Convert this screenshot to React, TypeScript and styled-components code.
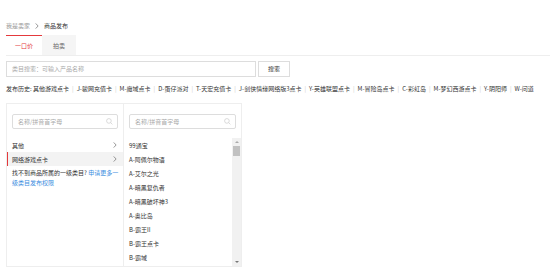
import styled, { createGlobalStyle } from "styled-components";

const GlobalStyle = createGlobalStyle`
    html, body {
        margin: 0;
        padding: 0;
        background: #fff;
    }
    body {
        font-family: "Noto Sans CJK SC", "Noto Sans", sans-serif;
        font-size: 6px;
        color: #333;
    }
`;

const Page = styled.div`
    padding: 21px 6px 0;
    width: 550px;
    box-sizing: border-box;
    overflow: hidden;
`;

const Breadcrumb = styled.div`
    display: flex;
    align-items: center;
    gap: 5px;
    height: 10px;
    line-height: 10px;
    color: #999;
`;

const Crumb = styled.span<{ $current?: boolean }>`
    color: ${(p) => (p.$current ? "#333" : "#999")};
`;

const Tabs = styled.div`
    display: flex;
    margin-top: 4px;
    margin-right: -6px;
    border-bottom: 1px solid #eee;
`;

const Tab = styled.div<{ $active?: boolean }>`
    width: ${(p) => (p.$active ? 36 : 34)}px;
    height: 20px;
    line-height: 20px;
    text-align: center;
    box-sizing: border-box;
    border-top: 1px solid ${(p) => (p.$active ? "#e4393c" : "#f5f5f5")};
    background: ${(p) => (p.$active ? "#fff" : "#f5f5f5")};
    color: ${(p) => (p.$active ? "#e4393c" : "#666")};
`;

const SearchRow = styled.div`
    display: flex;
    gap: 2px;
    margin-top: 5px;
`;

const SearchInput = styled.div`
    width: 250px;
    height: 16px;
    line-height: 14px;
    box-sizing: border-box;
    border: 1px solid #ddd;
    padding-left: 5px;
    color: #aaa;
`;

const SearchButton = styled.div`
    width: 32px;
    height: 16px;
    line-height: 14px;
    box-sizing: border-box;
    border: 1px solid #ddd;
    text-align: center;
    color: #333;
`;

const History = styled.div`
    display: flex;
    align-items: center;
    margin-top: 7px;
    height: 10px;
    line-height: 10px;
    white-space: nowrap;
    color: #333;
`;

const Sep = styled.span`
    color: #ccc;
    margin: 0 3px;
`;

const Panel = styled.div`
    display: flex;
    width: 236px;
    height: 164px;
    margin-top: 9px;
    border: 1px solid #eee;
    box-sizing: border-box;
`;

const Column = styled.div<{ $divider?: boolean }>`
    display: flex;
    flex-direction: column;
    width: ${(p) => (p.$divider ? 117 : 118)}px;
    border-right: ${(p) => (p.$divider ? "1px solid #eee" : "none")};
    box-sizing: border-box;
    padding-top: 10px;
`;

const FilterBox = styled.div`
    display: flex;
    align-items: center;
    justify-content: space-between;
    margin: 0 5px;
    height: 15px;
    box-sizing: border-box;
    border: 1px solid #ddd;
    border-radius: 2px;
    padding: 0 4px 0 5px;
    color: #aaa;
`;

const ListArea = styled.div`
    display: flex;
    flex: 1;
    margin-top: 9px;
    min-height: 0;
`;

const List = styled.div`
    flex: 1;
    overflow: hidden;
`;

const Item = styled.div<{ $selected?: boolean }>`
    display: flex;
    align-items: center;
    justify-content: space-between;
    height: 14px;
    padding: 0 6px 0 ${(p) => (p.$selected ? 4 : 5)}px;
    background: ${(p) => (p.$selected ? "#f3f3f3" : "transparent")};
    border-left: ${(p) => (p.$selected ? "1px solid #e4393c" : "none")};
    color: #333;
`;

const Note = styled.div`
    padding: 2px 5px 0;
    color: #333;
`;

const NoteLine = styled.div`
    height: 10px;
    line-height: 10px;
    white-space: nowrap;
`;

const Link = styled.span`
    color: #3b8de0;
`;

const Track = styled.div`
    display: flex;
    flex-direction: column;
    align-items: center;
    width: 9px;
    background: #f1f1f1;
`;

const Arrow = styled.div<{ $down?: boolean }>`
    width: 0;
    height: 0;
    margin: 3px 0;
    border-left: 2px solid transparent;
    border-right: 2px solid transparent;
    ${(p) => (p.$down ? "border-top: 2px solid #777;" : "border-bottom: 2px solid #aaa;")}
`;

const Thumb = styled.div`
    width: 7px;
    height: 10px;
    background: #c1c1c1;
`;

const Spacer = styled.div`
    flex: 1;
`;

function SearchIcon() {
    return (
        <svg width="7" height="7" viewBox="0 0 12 12" fill="none" stroke="#ccc" strokeWidth="1.2">
            <circle cx="5" cy="5" r="4" />
            <line x1="8" y1="8" x2="11" y2="11" />
        </svg>
    );
}

function Chevron() {
    return (
        <svg width="4" height="6" viewBox="0 0 4 7" fill="none" stroke="#666" strokeWidth="0.8">
            <polyline points="0.5,0.5 3.3,3.5 0.5,6.5" />
        </svg>
    );
}

const HISTORY = [
    "其他游戏点卡",
    "J-骏网充值卡",
    "M-魔域点卡",
    "D-蛋仔派对",
    "T-天宏充值卡",
    "J-剑侠情缘网络版3点卡",
    "Y-英雄联盟点卡",
    "M-冒险岛点卡",
    "C-彩虹岛",
    "M-梦幻西游点卡",
    "Y-阴阳师",
    "W-问道",
];

const GAMES = [
    "99通宝",
    "A-阿佩尔物语",
    "A-艾尔之光",
    "A-暗黑复仇者",
    "A-暗黑破坏神3",
    "A-奥比岛",
    "B-霸王II",
    "B-霸王点卡",
    "B-霸域",
];

export default function App() {
    return (
        <>
            <GlobalStyle />
            <Page>
                <Breadcrumb>
                    <Crumb>我是卖家</Crumb>
                    <Chevron />
                    <Crumb $current>商品发布</Crumb>
                </Breadcrumb>
                <Tabs>
                    <Tab $active>一口价</Tab>
                    <Tab>拍卖</Tab>
                </Tabs>
                <SearchRow>
                    <SearchInput>类目搜索：可输入产品名称</SearchInput>
                    <SearchButton>搜索</SearchButton>
                </SearchRow>
                <History>
                    <span>发布历史:&nbsp;</span>
                    {HISTORY.map((h, idx) => (
                        <span key={`history-${idx}`}>
                            {idx > 0 && <Sep>|</Sep>}
                            {h}
                        </span>
                    ))}
                </History>
                <Panel>
                    <Column $divider>
                        <FilterBox>
                            名称/拼音首字母
                            <SearchIcon />
                        </FilterBox>
                        <ListArea>
                            <List>
                                <Item>
                                    其他
                                    <Chevron />
                                </Item>
                                <Item $selected>
                                    网络游戏点卡
                                    <Chevron />
                                </Item>
                                <Note>
                                    <NoteLine>
                                        找不到商品所属的一级类目? <Link>申请更多一</Link>
                                    </NoteLine>
                                    <NoteLine>
                                        <Link>级类目发布权限</Link>
                                    </NoteLine>
                                </Note>
                            </List>
                        </ListArea>
                    </Column>
                    <Column>
                        <FilterBox>
                            名称/拼音首字母
                            <SearchIcon />
                        </FilterBox>
                        <ListArea>
                            <List>
                                {GAMES.map((g, idx) => (
                                    <Item key={`game-${idx}`}>{g}</Item>
                                ))}
                            </List>
                            <Track>
                                <Arrow />
                                <Thumb />
                                <Spacer />
                                <Arrow $down />
                            </Track>
                        </ListArea>
                    </Column>
                </Panel>
            </Page>
        </>
    );
}
